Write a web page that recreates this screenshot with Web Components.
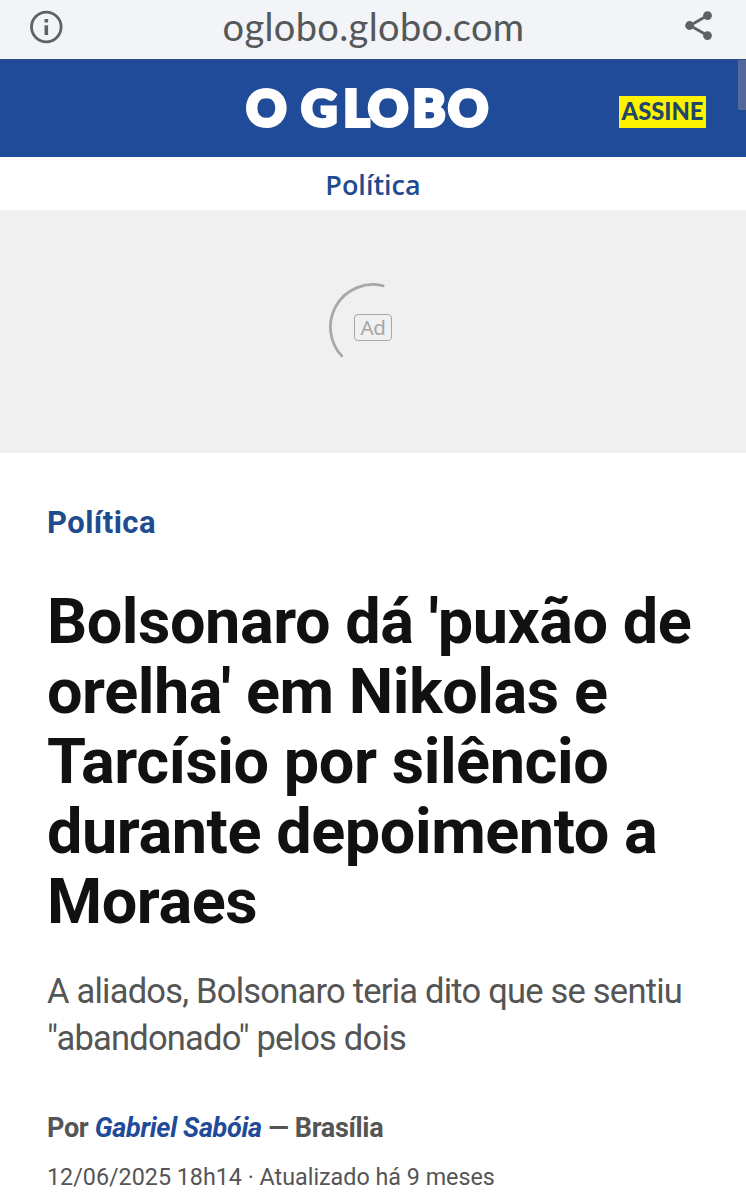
<!DOCTYPE html>
<html lang="pt-BR">
<head>
<meta charset="utf-8">
<title>O Globo</title>
<style>
  body {
    margin: 0;
    background: #fff;
    font-family: Roboto, sans-serif;
    color: #555;
    overflow: hidden;
  }
</style>
</head>
<body>

<news-page>
  <browser-bar slot="browser">oglobo.globo.com</browser-bar>
  <site-header slot="header"></site-header>
  <section-nav slot="nav">Política</section-nav>
  <ad-slot slot="ad">Ad</ad-slot>
  <article-head>
    <span slot="section">Política</span>
    <span slot="title">Bolsonaro dá 'puxão de<br>orelha' em Nikolas e<br>Tarcísio por silêncio<br>durante depoimento a<br>Moraes</span>
    <span slot="lead">A aliados, Bolsonaro teria dito que se sentiu</span>
    <span slot="lead-end">"abandonado" pelos dois</span>
    <article-byline slot="byline" place="Brasília">Gabriel Sabóia</article-byline>
    <span slot="date">12/06/2025 18h14 · Atualizado há 9 meses</span>
  </article-head>
</news-page>

<script>
  // attach an open shadow root and fill it
  function render(el, html){
    el.attachShadow({mode: 'open'}).innerHTML = html;
  }

  class NewsPage extends HTMLElement {
    constructor(){
      super();
      render(this, `
      <style>
        :host { display: flex; flex-direction: column; height: 1200px; overflow: hidden; }
      </style>
      <slot name="browser"></slot>
      <slot name="header"></slot>
      <slot name="nav"></slot>
      <slot name="ad"></slot>
      <slot></slot>`);
    }
  }

  class BrowserBar extends HTMLElement {
    constructor(){
      super();
      render(this, `
      <style>
        :host {
          display: flex; align-items: center; justify-content: space-between;
          box-sizing: border-box; flex: none; height: 59px; padding: 0 30px 5px 29px;
          background: #f2f4f7; color: #555759;
        }
        .url { font: 38px/44px Lato, sans-serif; letter-spacing: 0.35px; padding-bottom: 2px; }
        svg { display: block; }
      </style>
      <svg width="34" height="34" viewBox="0 0 34 34">
        <circle cx="17.3" cy="17" r="14.8" fill="none" stroke="#5f6164" stroke-width="2.8"/>
        <path d="M15.5 9h3.6v3.4h-3.6zM15.5 15.2h3.6v9.8h-3.6z" fill="#5f6164"/>
      </svg>
      <span class="url"><slot></slot></span>
      <svg width="32" height="32" viewBox="0 0 32 32">
        <path d="M23.5 4.5L6 14.5L23.5 24.5" fill="none" stroke="#5f6164" stroke-width="2.8"/>
        <g fill="#5f6164">
          <circle cx="23.5" cy="4.6" r="4.4"/>
          <circle cx="5.6" cy="14.5" r="4.4"/>
          <circle cx="23.5" cy="24.6" r="4.4"/>
        </g>
      </svg>`);
    }
  }

  class SiteHeader extends HTMLElement {
    constructor(){
      super();
      render(this, `
      <style>
        :host {
          display: grid; grid-template-columns: 1fr 246px 1fr; align-items: center;
          position: relative; box-sizing: border-box; flex: none; height: 98px;
          background: #1f4b99; border-top: 1px solid #2f4a80;
        }
        .logo { grid-column: 2; display: block; margin-left: -6px; }
        .subscribe { justify-self: end; margin: 6px 40px 0 0; background: #fff200; display: block; }
        .scroll {
          position: absolute; top: 0; right: 0; width: 8px; height: 50px; background: #53699b;
        }
      </style>
      <svg class="logo" width="258" height="80" viewBox="244 68 258 80">
        <text x="246.3 301.3 343.5 368 412.5 448" y="125" fill="#fff" stroke="#fff" stroke-width="3.8"
          font-family="Lato" font-weight="900" font-size="49.5">OGLOBO</text>
      </svg>
      <svg class="subscribe" width="87" height="32" viewBox="0 0 87 32">
        <text x="2.5" y="23.5" textLength="82" lengthAdjust="spacingAndGlyphs" fill="#1d4668"
          font-family="Lato" font-weight="900" font-size="24">ASSINE</text>
      </svg>
      <div class="scroll"></div>`);
    }
  }

  class SectionNav extends HTMLElement {
    constructor(){
      super();
      render(this, `
      <style>
        :host {
          display: flex; align-items: center; justify-content: center;
          box-sizing: border-box; flex: none; height: 53px; padding-top: 3px;
          font: 600 27px/36px "Open Sans", sans-serif; color: #1f4b8f;
        }
      </style>
      <slot></slot>`);
    }
  }

  class AdSlot extends HTMLElement {
    constructor(){
      super();
      render(this, `
      <style>
        :host {
          display: grid; place-items: center; box-sizing: border-box;
          flex: none; height: 243px; padding-bottom: 9px; background: #f0f0f0; color: #a6a6a6;
        }
        svg, .label { grid-area: 1 / 1; }
        .label {
          box-sizing: border-box; width: 38px; height: 27px; border: 1.5px solid #a8a8a8; border-radius: 4px;
          font: 20.5px/24px "Noto Sans", sans-serif; letter-spacing: -0.3px; text-align: center;
        }
      </style>
      <svg width="90" height="90" viewBox="-45 -45 90 90">
        <path d="M11.3 -41A42.6 42.6 0 0 0 -30.5 29.8" fill="none" stroke="#a8a8a8" stroke-width="2.8"/>
      </svg>
      <span class="label"><slot></slot></span>`);
    }
  }

  class ArticleHead extends HTMLElement {
    constructor(){
      super();
      render(this, `
      <style>
        :host { display: flex; flex-direction: column; padding: 51px 0 0 47px; white-space: nowrap; }
        h1, p { margin: 0; }
        .section { font-size: 31px; line-height: 38px; font-weight: 700; color: #1f4b8f; letter-spacing: 0.45px; }
        h1 { margin-top: 45px; font-size: 63px; line-height: 70px; font-weight: 700; color: #111; letter-spacing: -0.45px; }
        .lead { margin-top: 31px; font-size: 34.5px; line-height: 47px; letter-spacing: -0.78px; }
        .date { margin-top: 17px; font-size: 23.3px; line-height: 30px; }
      </style>
      <div class="section"><slot name="section"></slot></div>
      <h1><slot name="title"></slot></h1>
      <p class="lead"><slot name="lead"></slot><br><slot name="lead-end"></slot></p>
      <slot name="byline"></slot>
      <p class="date"><slot name="date"></slot></p>`);
    }
  }

  class ArticleByline extends HTMLElement {
    constructor(){
      super();
      render(this, `
      <style>
        :host { display: block; margin-top: 49px; font-size: 27px; line-height: 34px; font-weight: 700; letter-spacing: -0.32px; }
        em { color: #1f4b99; }
      </style>
      Por <em><slot></slot></em> — ${this.getAttribute('place')}`);
    }
  }

  customElements.define('news-page', NewsPage);
  customElements.define('browser-bar', BrowserBar);
  customElements.define('site-header', SiteHeader);
  customElements.define('section-nav', SectionNav);
  customElements.define('ad-slot', AdSlot);
  customElements.define('article-head', ArticleHead);
  customElements.define('article-byline', ArticleByline);
</script>
</body>
</html>
